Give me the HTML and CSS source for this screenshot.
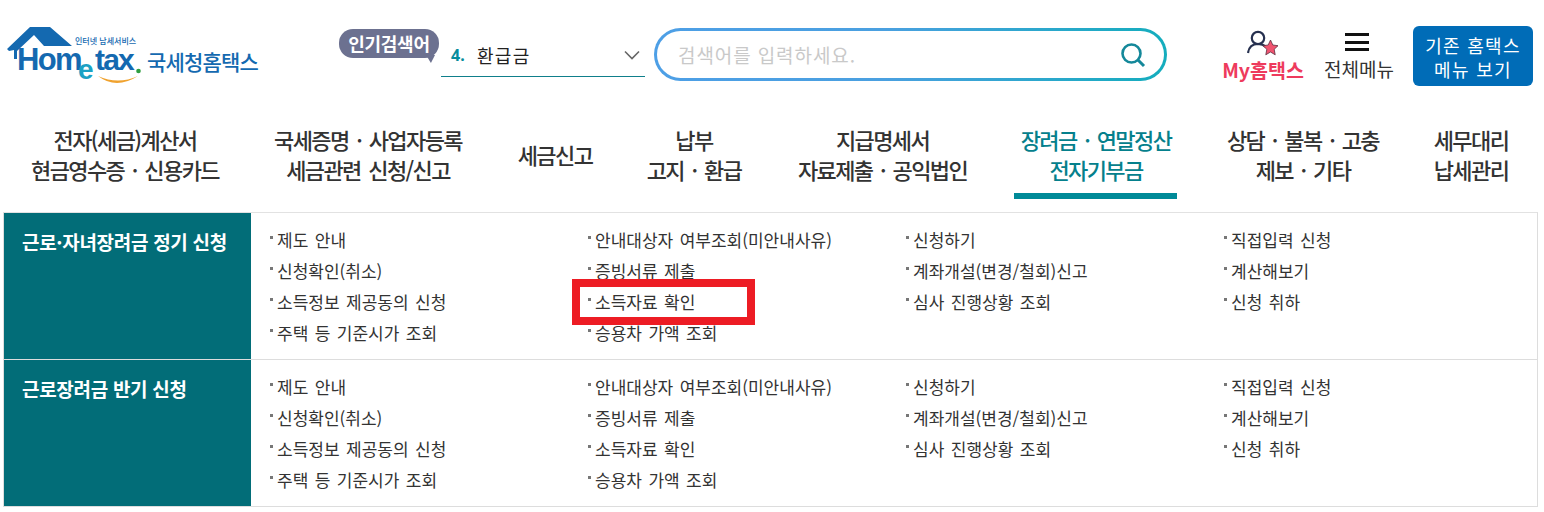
FILE: index.html
```html
<!DOCTYPE html>
<html lang="ko">
<head>
<meta charset="utf-8">
<title>국세청홈택스</title>
<link rel="stylesheet" href="styles.css">
</head>
<body>
<header class="top">
  <a class="logo">
    <svg class="logo-mark" width="141" height="62" viewBox="0 0 141 62">
      <path d="M1 22 L24 0 L44 0 L66 19 L38 19 L28 8 L11 24 L11 32 L8 32 L8 23 L3 24 Z" fill="#1469b0"/>
      <text x="69" y="17" class="logo-small">인터넷 납세서비스</text>
      <text x="11" y="43" class="logo-home">Hom</text>
      <text x="72" y="51.5" class="logo-e">e</text>
      <text x="89" y="43" class="logo-tax">tax</text>
      <circle cx="132.5" cy="44" r="2.3" fill="#2f9e3f"/>
      <path d="M92 49 Q110 63 132 49 Q112 58 92 49 Z" fill="#f0a22e"/>
    </svg>
    <span class="logo-name">국세청홈택스</span>
  </a>
  <div class="popular">
    <span class="bubble">인기검색어</span>
    <div class="rank"><b>4.</b><span>환급금</span>
      <svg class="chev" width="16" height="10" viewBox="0 0 16 10"><path d="M1 1.5 L8 8.5 L15 1.5" fill="none" stroke="#666" stroke-width="1.6"/></svg>
    </div>
  </div>
  <div class="search">
    <span class="placeholder">검색어를 입력하세요.</span>
    <svg class="lens" width="26" height="26" viewBox="0 0 26 26"><circle cx="11.5" cy="11.5" r="9" fill="none" stroke="#14889a" stroke-width="2.6"/><path d="M18 18 L24 24" stroke="#14889a" stroke-width="3"/></svg>
  </div>
  <a class="my">
    <svg width="32" height="26" viewBox="0 0 32 26">
      <circle cx="11" cy="8" r="6.2" fill="none" stroke="#26304f" stroke-width="2.2"/>
      <path d="M1 23 C2 16 7 14 11 14 C14 14 17 15 19 17" fill="none" stroke="#26304f" stroke-width="2.2"/>
      <path d="M23.500 10 L25.800 15 L31 15.700 L27.200 19.300 L28.200 24.800 L23.500 22 L18.800 24.800 L19.800 19.300 L16 15.700 L21.200 15 Z" fill="#f0536f" stroke="#5b3040" stroke-width=".8"/>
    </svg>
    <span>My홈택스</span>
  </a>
  <a class="all">
    <span class="burger"><i></i><i></i><i></i></span>
    <span>전체메뉴</span>
  </a>
  <a class="old">기존 홈택스<br>메뉴 보기</a>
</header>
<nav class="gnb">
  <a class="n1">전자(세금)계산서<br>현금영수증 · 신용카드</a>
  <a class="n2">국세증명 · 사업자등록<br>세금관련 신청/신고</a>
  <a class="n3">세금신고</a>
  <a class="n4">납부<br>고지 · 환급</a>
  <a class="n5">지급명세서<br>자료제출 · 공익법인</a>
  <a class="n6 on">장려금 · 연말정산<br>전자기부금</a>
  <a class="n7">상담 · 불복 · 고충<br>제보 · 기타</a>
  <a class="n8">세무대리<br>납세관리</a>
</nav>
<main class="menu">
  <section class="row">
    <h2>근로·자녀장려금 정기 신청</h2>
    <ul>
      <li>제도 안내</li><li>안내대상자 여부조회(미안내사유)</li><li>신청하기</li><li>직접입력 신청</li>
      <li>신청확인(취소)</li><li>증빙서류 제출</li><li>계좌개설(변경/철회)신고</li><li>계산해보기</li>
      <li>소득정보 제공동의 신청</li><li class="marked">소득자료 확인<span class="redbox"></span></li><li>심사 진행상황 조회</li><li>신청 취하</li>
      <li>주택 등 기준시가 조회</li><li>승용차 가액 조회</li>
    </ul>
  </section>
  <section class="row">
    <h2>근로장려금 반기 신청</h2>
    <ul>
      <li>제도 안내</li><li>안내대상자 여부조회(미안내사유)</li><li>신청하기</li><li>직접입력 신청</li>
      <li>신청확인(취소)</li><li>증빙서류 제출</li><li>계좌개설(변경/철회)신고</li><li>계산해보기</li>
      <li>소득정보 제공동의 신청</li><li>소득자료 확인</li><li>심사 진행상황 조회</li><li>신청 취하</li>
      <li>주택 등 기준시가 조회</li><li>승용차 가액 조회</li>
    </ul>
  </section>
</main>
</body>
</html>
```
FILE: styles.css
```css
* { box-sizing: border-box; }
html, body { margin: 0; padding: 0; height: 512px; overflow: hidden; background: #fff; }
body { font-family: "Noto Sans CJK KR", "Noto Sans", sans-serif; color: #333; }
a { color: inherit; text-decoration: none; }

.top { display: flex; height: 120px; padding: 26px 0 0 6px; align-items: flex-start; }
.logo { display: flex; width: 331px; align-items: flex-start; }
.logo-mark { flex: none; margin-top: 1px; overflow: visible; }
.logo-small { font-size: 8px; fill: #1469b0; font-weight: 500; font-family: "Noto Sans CJK KR", sans-serif; }
.logo-home, .logo-tax { font-family: "Liberation Sans", sans-serif; font-weight: 700; fill: #1469b0; }
.logo-home { font-size: 31px; letter-spacing: -1.6px; }
.logo-tax { font-size: 30px; letter-spacing: -1.8px; }
.logo-e { font-family: "Liberation Sans", sans-serif; font-size: 28px; font-weight: 700; fill: #1ba2c4; }
.logo-name { font-size: 21px; font-weight: 500; color: #1469b0; letter-spacing: -.8px; margin: 21px 0 0 0; line-height: 28px; white-space: nowrap; }

.popular { display: flex; width: 316px; }
.bubble { position: relative; flex: none; width: 100px; height: 29px; margin: 3px 0 0 2px; background: #6c7190; border-radius: 14px; color: #fff; font-size: 18px; font-weight: 700; text-align: center; line-height: 28px; letter-spacing: -.3px; white-space: nowrap; }
.bubble::after { content: ""; position: absolute; right: 4px; top: 26px; width: 9px; height: 8px; background: #6c7190; clip-path: polygon(0 0, 100% 0, 55% 100%); }
.rank { display: flex; align-items: center; height: 51px; width: 204px; margin-left: 2px; border-bottom: 1px solid #0f7f8b; padding: 7px 0 0 10px; font-size: 18px; color: #222; }
.rank b { color: #078c9c; font-size: 16px; width: 26px; font-family: "Noto Sans", sans-serif; }
.rank span { letter-spacing: 1.3px; font-size: 18px; }
.chev { margin-left: auto; margin-right: 5px; }

.search { display: flex; align-items: center; justify-content: space-between; width: 513px; height: 53px; margin-left: 1px; margin-top: 2px; border: 3px solid transparent; border-radius: 27px; background: linear-gradient(#fff, #fff) padding-box, linear-gradient(90deg, #4d9fe6, #4aa0e0 45%, #14adbd) border-box; padding: 0 18px 0 21px; }
.placeholder { font-size: 19px; color: #c9c9c9; letter-spacing: .9px; }
.lens { flex: none; }

.my { display: flex; flex-direction: column; align-items: center; width: 80px; margin-left: 56px; margin-top: 4px; color: #ee3b5d; font-weight: 700; font-size: 19.5px; }
.my span { line-height: 24px; margin-top: 2px; white-space: nowrap; }
.all { display: flex; flex-direction: column; align-items: center; width: 70px; margin-left: 21px; font-size: 19px; color: #333; }
.all span:last-child { line-height: 24px; margin-top: 6px; white-space: nowrap; }
.burger { display: flex; flex-direction: column; gap: 4.5px; width: 24px; margin: 7px 4px 0 0; }
.burger i { display: block; height: 3px; flex: none; background: #111; }
.old { width: 120px; height: 60px; margin-left: 19px; background: #006cb7; border-radius: 6px; color: #fff; font-size: 18px; line-height: 24px; text-align: center; padding-top: 7px; letter-spacing: 1.3px; }

.gnb { display: flex; height: 92px; position: relative; font-size: 22px; line-height: 30px; font-weight: 500; letter-spacing: -1.6px; word-spacing: 3px; color: #333; text-align: center; }
.gnb a { display: flex; align-items: center; justify-content: center; height: 60px; margin-top: 4px; white-space: nowrap; flex: none; }
.n1 { width: 250px; }
.n2 { width: 236px; }
.n3 { width: 138px; }
.n4 { width: 140px; }
.n5 { width: 237px; }
.n6 { width: 190px; }
.n7 { width: 224px; }
.n8 { width: 112px; }
.gnb .on { color: #05808c; position: relative; }
.gnb .on::after { content: ""; position: absolute; left: 13px; right: 14px; top: 69px; height: 6px; background: #008a98; }

.menu { margin: 0 6px 0 3px; border-top: 1px solid #e2e2e2; border-left: 1px solid #ddd; border-right: 1px solid #ddd; }
.row { display: flex; height: 147px; border-bottom: 1px solid #ddd; }
.row h2 { flex: none; width: 247px; margin: 0; background: #026d78; color: #fff; font-size: 19px; font-weight: 700; letter-spacing: -.3px; padding: 15px 0 0 18px; line-height: 28px; }
.row ul { list-style: none; margin: 0; padding: 11px 0 0 18px; display: grid; grid-template-columns: repeat(4, 318px); grid-auto-rows: 31px; flex: 1; }
.row li { position: relative; padding-left: 8px; font-size: 17px; line-height: 31px; color: #333; white-space: nowrap; height: 31px; word-spacing: 1.7px; }
.row li::before { content: ""; position: absolute; left: 1px; top: 12px; width: 3px; height: 3px; background: #777; }
.redbox { position: absolute; left: -15px; top: -7px; width: 183px; height: 46px; border: 8px solid #ed1c24; }
```
